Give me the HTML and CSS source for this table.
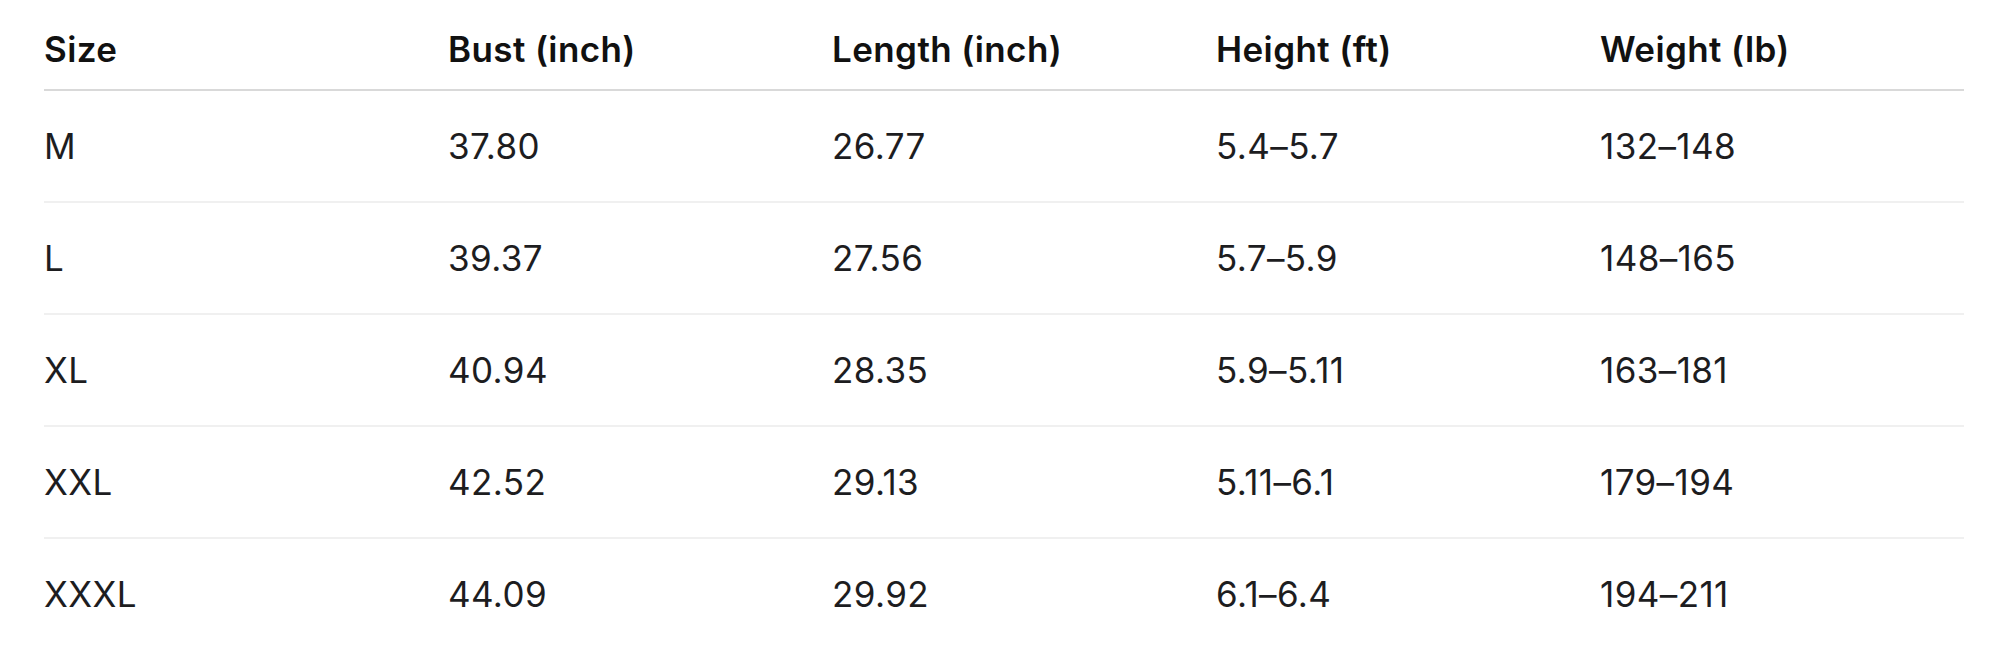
FILE: index.html
```html
<!DOCTYPE html>
<html lang="en">
<head>
<meta charset="utf-8">
<title>Size chart</title>
<link rel="stylesheet" href="styles.css">
</head>
<body>
<div class="chart">
  <div class="row head">
    <div class="cell">Size</div>
    <div class="cell">Bust (inch)</div>
    <div class="cell">Length (inch)</div>
    <div class="cell">Height (ft)</div>
    <div class="cell">Weight (lb)</div>
  </div>
  <div class="row">
    <div class="cell">M</div>
    <div class="cell">37.80</div>
    <div class="cell">26.77</div>
    <div class="cell">5.4–5.7</div>
    <div class="cell">132–148</div>
  </div>
  <div class="row">
    <div class="cell">L</div>
    <div class="cell">39.37</div>
    <div class="cell">27.56</div>
    <div class="cell">5.7–5.9</div>
    <div class="cell">148–165</div>
  </div>
  <div class="row">
    <div class="cell">XL</div>
    <div class="cell">40.94</div>
    <div class="cell">28.35</div>
    <div class="cell">5.9–5.11</div>
    <div class="cell">163–181</div>
  </div>
  <div class="row">
    <div class="cell">XXL</div>
    <div class="cell">42.52</div>
    <div class="cell">29.13</div>
    <div class="cell">5.11–6.1</div>
    <div class="cell">179–194</div>
  </div>
  <div class="row last">
    <div class="cell">XXXL</div>
    <div class="cell">44.09</div>
    <div class="cell">29.92</div>
    <div class="cell">6.1–6.4</div>
    <div class="cell">194–211</div>
  </div>
</div>
</body>
</html>
```

FILE: styles.css
```css
html, body {
  margin: 0;
  padding: 0;
  background: #ffffff;
}

body {
  font-family: Inter, "Noto Sans", "Liberation Sans", sans-serif;
  color: #1d1d1f;
}

.chart {
  width: 1920px;
  margin-left: 44px;
}

.row {
  display: grid;
  grid-template-columns: 404px 384px 384px 384px 1fr;
  align-items: center;
  box-sizing: border-box;
  height: 112px;
  border-bottom: 2px solid #f0f0f0;
  font-size: 35px;
  line-height: 42px;
  letter-spacing: 0.4px;
}

.row.last {
  border-bottom: none;
  height: 110px;
}

.head {
  height: 91px;
  padding-top: 9px;
  border-bottom: 2px solid #d9d9d9;
  font-weight: 600;
  color: #111111;
}

.cell {
  white-space: nowrap;
}
```
